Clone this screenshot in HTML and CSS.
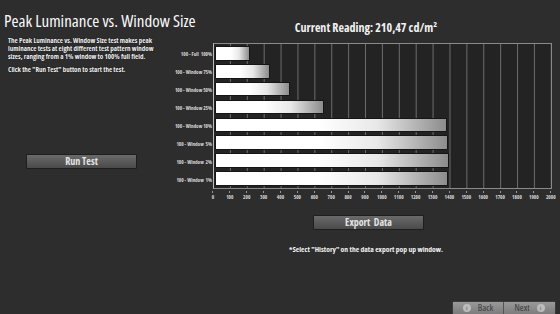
FILE: index.html
```html
<!DOCTYPE html>
<html lang="en">
<head>
  <meta charset="UTF-8">
  <title>Peak Luminance vs. Window Size</title>
  <link rel="stylesheet" href="styles.css">
</head>
<body>

  <div class="page">
    <div class="leftCol">
      <h1 class="title">Peak Luminance vs. Window Size</h1>
      <p class="desc">The Peak Luminance vs. Window Size test makes peak luminance tests at eight different test pattern window sizes, ranging from a 1% window to 100% full field.</p>
      <p class="desc">Click the "Run Test" button to start the test.</p>
      <button class="btn runBtn">Run Test</button>
    </div>

    <div class="rightCol">
      <div class="reading">Current Reading: 210,47 cd/m²</div>

      <div class="chart">
        <div class="labels">
          <span>100 - Full&nbsp; 100%</span>
          <span>100 - Window 75%</span>
          <span>100 - Window 50%</span>
          <span>100 - Window 25%</span>
          <span>100 - Window 10%</span>
          <span>100 - Window&nbsp; 5%</span>
          <span>100 - Window&nbsp; 2%</span>
          <span>100 - Window&nbsp; 1%</span>
        </div>
        <div class="plot">
          <div class="bar" style="width: 10.5%"></div>
          <div class="bar" style="width: 16.5%"></div>
          <div class="bar" style="width: 22.2%"></div>
          <div class="bar" style="width: 32.5%"></div>
          <div class="bar" style="width: 68.9%"></div>
          <div class="bar" style="width: 69.2%"></div>
          <div class="bar" style="width: 69.5%"></div>
          <div class="bar" style="width: 69.4%"></div>
        </div>
      </div>

      <div class="axis">
        <span>0</span><span>100</span><span>200</span><span>300</span><span>400</span><span>500</span><span>600</span><span>700</span><span>800</span><span>900</span><span>1000</span><span>1100</span><span>1200</span><span>1300</span><span>1400</span><span>1500</span><span>1600</span><span>1700</span><span>1800</span><span>1900</span><span>2000</span>
      </div>

      <button class="btn exportBtn">Export&nbsp; Data</button>
      <p class="note">*Select "History" on the data export pop up window.</p>
    </div>
  </div>

  <div class="navBar">
    <button class="navBtn"><span class="navIcon">&#8249;</span>Back</button>
    <button class="navBtn">Next<span class="navIcon">&#8250;</span></button>
  </div>

</body>
</html>
```

FILE: styles.css
```css
* { box-sizing: border-box; }
body {
  margin: 0;
  width: 560px;
  height: 314px;
  overflow: hidden;
  background: #2d2d2d;
  color: #f2f2f2;
  font-family: "Open Sans", "DejaVu Sans Condensed", sans-serif;
  font-stretch: 75%;
  display: flex;
  flex-direction: column;
}
.page {
  flex: 1;
  display: grid;
  grid-template-columns: 172px 1fr;
}
.leftCol {
  padding-top: 10px;
}
.title {
  margin: 0 0 0 4px;
  font-size: 17px;
  font-stretch: 80%;
  line-height: 21px;
  font-weight: normal;
  white-space: nowrap;
  color: #fafafa;
}
.desc {
  margin: 6px 0 0 8px;
  width: 158px;
  font-size: 7px;
  line-height: 8px;
  font-weight: bold;
  text-shadow: 0 0 1px #000;
}
.desc + .desc {
  margin-top: 5px;
}
.btn {
  display: block;
  width: 111px;
  height: 15px;
  padding: 0;
  border: 1px solid #1e1e1e;
  border-radius: 1px;
  background: linear-gradient(to bottom, #6a6a6a, #4a4a4a);
  color: #e4e4e4;
  font-family: inherit;
  font-stretch: inherit;
  font-size: 10px;
  line-height: 13px;
  font-weight: bold;
  cursor: pointer;
}
.runBtn {
  margin: 80px 0 0 26px;
}
.rightCol {
  padding-top: 21px;
}
.reading {
  text-align: center;
  font-size: 12px;
  line-height: 14px;
  font-weight: bold;
}
.chart {
  margin-top: 8px;
  display: flex;
}
.labels {
  width: 41px;
  display: flex;
  flex-direction: column;
  align-items: flex-end;
  justify-content: space-around;
  padding: 2px 1px 0 0;
  font-size: 5.2px;
  font-weight: bold;
  white-space: nowrap;
  color: #d8d8d8;
}
.plot {
  width: 339px;
  height: 146px;
  padding: 2px 0 2px 1px;
  display: flex;
  flex-direction: column;
  gap: 3.2px;
  border: 1px solid #8a8a8a;
  border-left-color: #bbb;
  background-color: #232323;
  background-image: linear-gradient(to right, #6c6c6c 1px, transparent 1px);
  background-size: 16.9px 100%;
  background-position: -1px 0;
}
.bar {
  height: 15px;
  border: 1px solid #151515;
  border-radius: 1px;
  background: linear-gradient(to right, #ffffff 45%, #e8e8e8 70%, #8c8c8c 100%);
}
.axis {
  margin: 2px 0 0 32.5px;
  display: flex;
  font-size: 5.2px;
  font-weight: bold;
  color: #d8d8d8;
}
.axis span {
  width: 16.9px;
  text-align: center;
  flex: none;
  padding-top: 2px;
  background: linear-gradient(#999, #999) no-repeat center top / 1px 2px;
}
.exportBtn {
  margin: 14px 0 0 141px;
}
.note {
  margin: 15px 0 0 0;
  text-align: center;
  font-size: 7.6px;
  font-weight: bold;
  line-height: 9px;
}
.navBar {
  align-self: flex-end;
  display: flex;
  margin: 0 4px 0 0;
  border: 1px solid #3a3a3a;
  border-bottom: none;
  border-radius: 2px 2px 0 0;
}
.navBtn {
  width: 51px;
  height: 12px;
  padding: 0;
  border: none;
  border-right: 1px solid #555;
  background: linear-gradient(to bottom, #9a9a9a, #7c7c7c);
  color: #3a3a3a;
  font-family: inherit;
  font-stretch: inherit;
  font-size: 9.5px;
  line-height: 12px;
  display: flex;
  align-items: center;
  justify-content: center;
  gap: 7px;
}
.navBtn:last-child {
  border-right: none;
}
.navIcon {
  width: 8px;
  height: 8px;
  border-radius: 50%;
  background: #bdbdbd;
  color: #8a8a8a;
  font-size: 8px;
  line-height: 7px;
  font-weight: bold;
}
```
